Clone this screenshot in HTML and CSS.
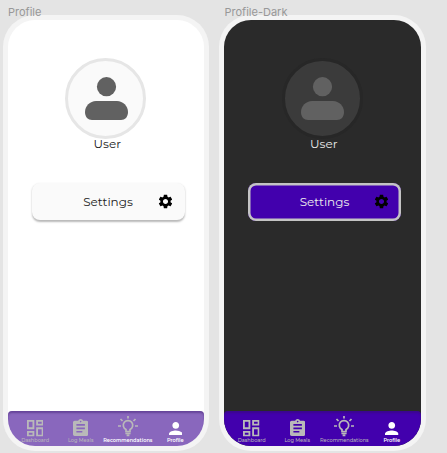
FILE: index.html
```
<!DOCTYPE html>
<html lang="en">
<head>
<meta charset="utf-8">
<title>Profile</title>
<link rel="stylesheet" href="styles.css">
</head>
<body>
<svg class="defs" aria-hidden="true">
  <symbol id="gear" viewBox="0 0 24 24"><path d="M19.14 12.94c.04-.3.06-.61.06-.94 0-.32-.02-.64-.07-.94l2.03-1.58c.18-.14.23-.41.12-.61l-1.92-3.32c-.12-.22-.37-.29-.59-.22l-2.39.96c-.5-.38-1.03-.7-1.62-.94l-.36-2.54c-.04-.24-.24-.41-.48-.41h-3.84c-.24 0-.43.17-.47.41l-.36 2.54c-.59.24-1.13.57-1.62.94l-2.39-.96c-.22-.08-.47 0-.59.22L2.74 8.87c-.12.21-.08.47.12.61l2.03 1.58c-.05.3-.09.63-.09.94s.02.64.07.94l-2.03 1.58c-.18.14-.23.41-.12.61l1.92 3.32c.12.22.37.29.59.22l2.39-.96c.5.38 1.03.7 1.62.94l.36 2.54c.05.24.24.41.48.41h3.84c.24 0 .44-.17.47-.41l.36-2.54c.59-.24 1.13-.56 1.62-.94l2.39.96c.22.08.47 0 .59-.22l1.92-3.32c.12-.22.07-.47-.12-.61l-2.01-1.58zM12 15.6c-1.98 0-3.6-1.62-3.6-3.6s1.62-3.6 3.6-3.6 3.6 1.62 3.6 3.6-1.62 3.6-3.6 3.6z"/></symbol>
  <symbol id="dashboard" viewBox="3 3 18 18"><path d="M19 5v2h-4V5h4M9 5v6H5V5h4m10 8v6h-4v-6h4M9 17v2H5v-2h4M21 3h-8v6h8V3zM11 3H3v10h8V3zm10 8h-8v10h8V11zm-10 4H3v6h8v-6z"/></symbol>
  <symbol id="meals" viewBox="3 1 18 20"><path d="M19 3h-4.18C14.4 1.84 13.3 1 12 1s-2.4.84-2.82 2H5c-1.1 0-2 .9-2 2v14c0 1.1.9 2 2 2h14c1.1 0 2-.9 2-2V5c0-1.1-.9-2-2-2zm-7 0c.55 0 1 .45 1 1s-.45 1-1 1-1-.45-1-1 .45-1 1-1zm2 14H7v-2h7v2zm3-4H7v-2h10v2zm0-4H7V7h10v2z"/></symbol>
  <symbol id="bulb" viewBox="0 0 20 21"><g fill="none" stroke="currentColor" stroke-width="1.700"><path d="M8 15.500v-2a4.700 4.700 0 1 1 4 0v2z"/><path d="M7.400 17.300h5.200M8.600 19.400h2.800M10 0v2.500M0 10h3M17 10h3M2.500 3l2 2M17.500 3l-2 2"/></g></symbol>
  <symbol id="person" viewBox="4 4 16 16"><path d="M12 12c2.21 0 4-1.79 4-4s-1.79-4-4-4-4 1.79-4 4 1.79 4 4 4zm0 2c-2.67 0-8 1.34-8 4v2h16v-2c0-2.66-5.33-4-8-4z"/></symbol>
  <symbol id="avatar" viewBox="0 0 43 43"><circle cx="21.5" cy="9.7" r="9.6"/><path d="M11 24h21c6 0 11 5 11 11 0 5-3 8-7 8H7c-4 0-7-3-7-8 0-6 5-11 11-11z"/></symbol>
</svg>
<main class="board">
  <section class="frame">
    <h2 class="title">Profile</h2>
    <div class="phone">
      <div class="screen">
        <div class="picture"><svg><use href="#avatar"/></svg></div>
        <p class="name">User</p>
        <button class="settings"><span>Settings</span><svg><use href="#gear"/></svg></button>
        <nav class="nav">
          <a class="item dash"><svg><use href="#dashboard"/></svg><span>Dashboard</span></a>
          <a class="item log"><svg><use href="#meals"/></svg><span>Log Meals</span></a>
          <a class="item rec"><svg><use href="#bulb"/></svg><span>Recommendations</span></a>
          <a class="item active"><svg><use href="#person"/></svg><span>Profile</span></a>
        </nav>
      </div>
    </div>
  </section>
  <section class="frame dark">
    <h2 class="title">Profile-Dark</h2>
    <div class="phone">
      <div class="screen">
        <div class="picture"><svg><use href="#avatar"/></svg></div>
        <p class="name">User</p>
        <button class="settings"><span>Settings</span><svg><use href="#gear"/></svg></button>
        <nav class="nav">
          <a class="item dash"><svg><use href="#dashboard"/></svg><span>Dashboard</span></a>
          <a class="item log"><svg><use href="#meals"/></svg><span>Log Meals</span></a>
          <a class="item rec"><svg><use href="#bulb"/></svg><span>Recommendations</span></a>
          <a class="item active"><svg><use href="#person"/></svg><span>Profile</span></a>
        </nav>
      </div>
    </div>
  </section>
</main>
</body>
</html>
```
FILE: styles.css
```
* { box-sizing: border-box; }
body {
  margin: 0;
  height: 453px;
  overflow: hidden;
  background: #e4e4e4;
  font-family: Montserrat, Inter, "Liberation Sans", sans-serif;
}
.defs { display: none; }
svg { display: block; fill: currentColor; flex: none; }
.board {
  display: flex;
  gap: 10px;
  padding-left: 2.5px;
}
.frame { width: 206.5px; }
.title {
  margin: 0;
  height: 15px;
  padding: 6px 0 0 5.5px;
  font: 400 11px/13px Inter, sans-serif;
  color: #989898;
  white-space: nowrap;
}
.phone {
  height: 436px;
  padding: 5px;
  border-radius: 32px;
  background: #f4f4f4;
}
.screen {
  display: flex;
  flex-direction: column;
  height: 426px;
  overflow: hidden;
  border-radius: 27px;
  background: #fff;
  color: #222;
}
.picture {
  display: grid;
  place-items: center;
  align-self: center;
  width: 81px;
  height: 81px;
  margin-top: 37.5px;
  border: 3px solid #e6e6e6;
  border-radius: 50%;
  background: #fafafa;
  color: #616161;
}
.picture svg { width: 43px; height: 43px; margin-left: 1px; }
.name {
  margin: -3px 0 0 3px;
  font-size: 12px;
  line-height: 16px;
  text-align: center;
}
.settings {
  display: grid;
  grid-template-columns: 1fr 17px 11px;
  align-items: center;
  width: 153px;
  height: 37px;
  margin: 31.5px 0 0 24px;
  padding: 0;
  border: 0;
  border-radius: 8px;
  background: #fafafa;
  box-shadow: 0 1.5px 2px rgba(0, 0, 0, .28);
  color: #222;
  font: inherit;
  font-size: 12px;
}
.settings span { padding-left: 28px; }
.settings svg { width: 17px; height: 17px; color: #000; }
.nav {
  display: grid;
  grid-template-columns: 45.4px 45.6px 48.6px 46.4px;
  height: 35px;
  margin-top: auto;
  padding-left: 5px;
  border-radius: 4px 4px 0 0;
  background: #8967bd;
  box-shadow: inset 0 2px 2px rgba(50, 15, 100, .4);
  color: #b9b9b9;
}
.item {
  display: flex;
  flex-direction: column;
  align-items: center;
  justify-content: flex-end;
  padding-bottom: 3px;
  font-size: 5px;
  line-height: 6px;
  font-weight: 500;
  white-space: nowrap;
}
.item svg { margin-bottom: .5px; }
.dash svg { width: 16.5px; height: 16.5px; }
.log svg { width: 15.3px; height: 17px; margin-bottom: 1px; }
.rec svg { width: 20px; height: 21px; }
.active svg { width: 13.5px; height: 13.5px; margin-bottom: 2px; }
.rec span { color: #fff; font-weight: 600; }
.active { color: #fff; font-weight: 600; }
.dark .screen { background: #2a2a2a; color: #e8e8e8; }
.dark .picture { border-color: #272727; background: #3b3b3b; }
.dark .settings {
  height: 38px;
  margin-top: 31px;
  background: #4200ad;
  box-shadow: inset 0 0 0 2.5px #c4c4c4;
  color: #eee;
}
.dark .nav { background: #4200ad; }
.dark .rec span { color: inherit; font-weight: 500; }
```
